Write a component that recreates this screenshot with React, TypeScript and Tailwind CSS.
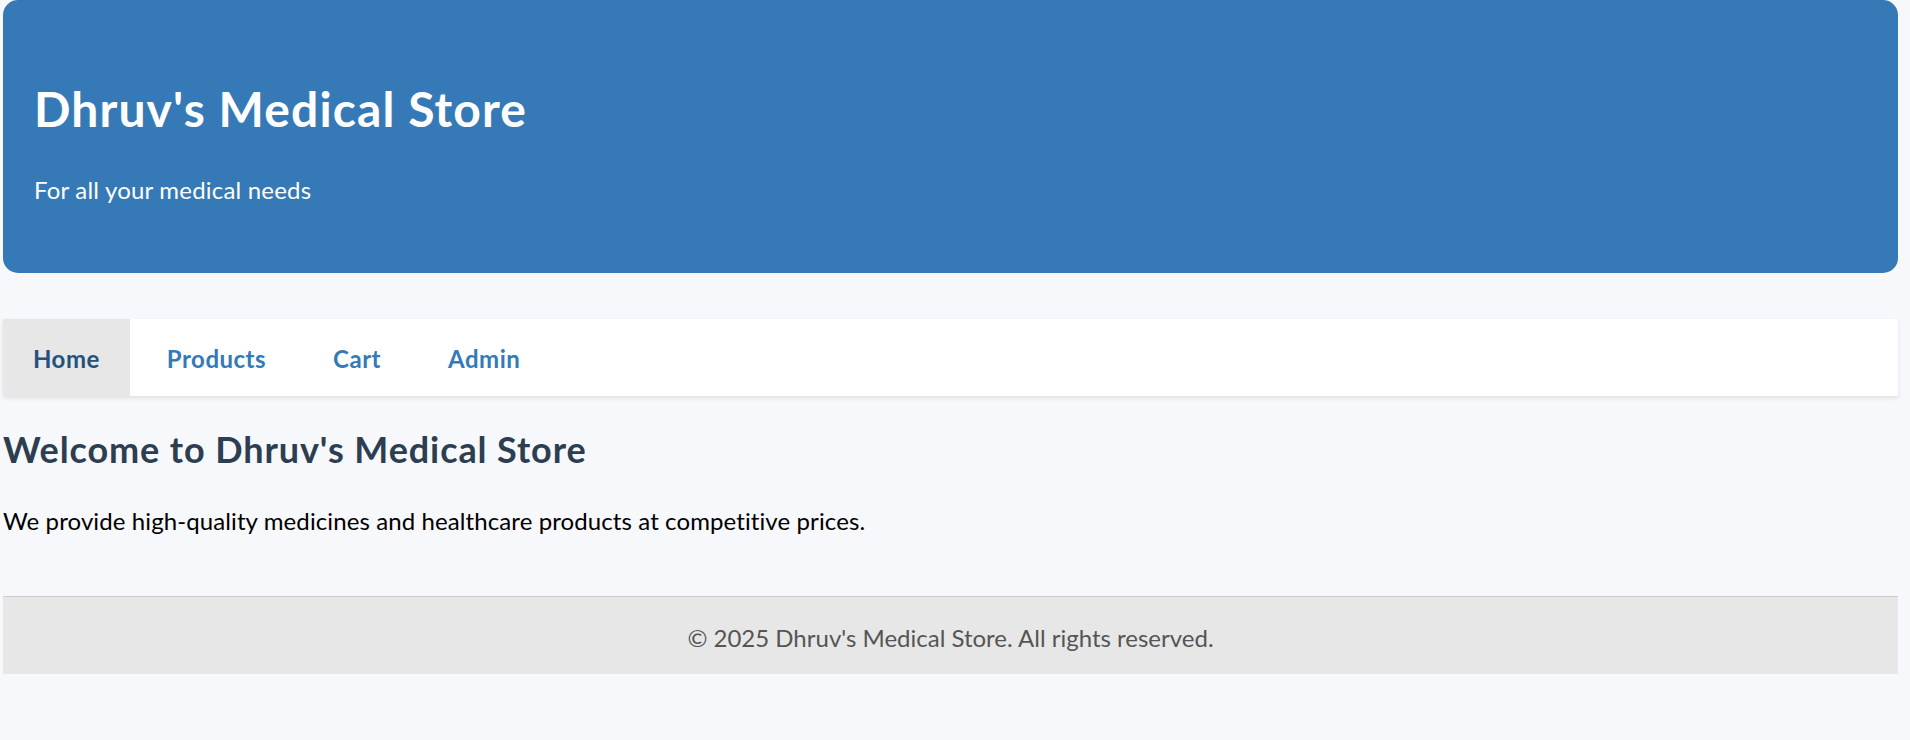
const navItems = [
  { label: "Home", active: true },
  { label: "Products", active: false },
  { label: "Cart", active: false },
  { label: "Admin", active: false },
];

export default function App() {
  return (
    <div
      className="min-h-[740px] w-full bg-[#f7f8fc] pl-[3px] pr-[12px] text-black"
      style={{ fontFamily: "Lato, 'Noto Sans', sans-serif" }}
    >
      <header className="rounded-[15px] bg-[#357ab7] px-[31px] pt-[80px] pb-[69px] text-white">
        <h1 className="text-[48px] font-bold leading-[58px] tracking-[1.1px]">Dhruv's Medical Store</h1>
        <p className="mt-[37px] text-[24px] leading-[29px] tracking-[0.2px]">For all your medical needs</p>
      </header>

      <nav className="mt-[46px] flex gap-[7px] bg-white shadow-[0_2px_4px_rgba(0,0,0,0.1)]">
        {navItems.map((item) => (
          <a
            key={item.label}
            href="#"
            className={
              item.active
                ? "bg-[#e7e7e7] px-[30px] pt-[25px] pb-[23px] text-[24px] font-bold leading-[29px] tracking-[0.5px] text-[#23527c]"
                : "px-[30px] pt-[25px] pb-[23px] text-[24px] font-bold leading-[29px] tracking-[0.5px] text-[#337ab7]"
            }
          >
            {item.label}
          </a>
        ))}
      </nav>

      <main>
        <h2 className="mt-[32px] text-[36px] font-bold leading-[43px] tracking-[0.9px] text-[#2c3e50]">
          Welcome to Dhruv's Medical Store
        </h2>
        <p className="mt-[35px] text-[24px] leading-[29px] tracking-[0.1px]">
          We provide high-quality medicines and healthcare products at competitive prices.
        </p>
      </main>

      <footer className="mt-[61px] border-t border-[#cccccc] bg-[#e7e7e7] pt-[26px] pb-[22px] text-center text-[24px] leading-[29px] text-[#555555]">
        © 2025 Dhruv's Medical Store. All rights reserved.
      </footer>
    </div>
  );
}
